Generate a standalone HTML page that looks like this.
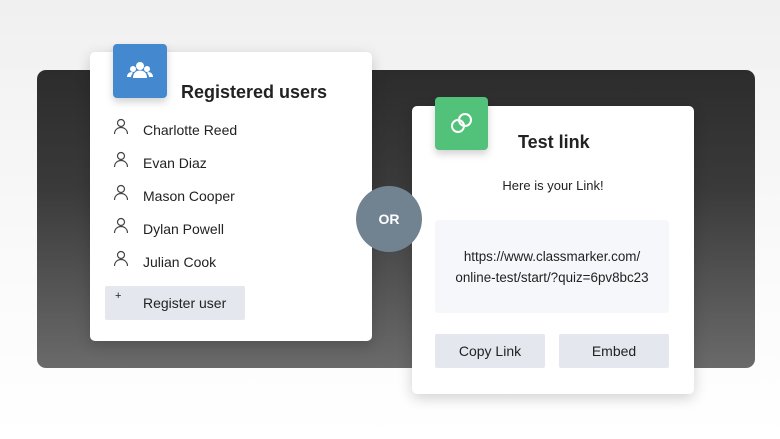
<!DOCTYPE html>
<html><head><meta charset="utf-8"><style>
*{margin:0;padding:0;box-sizing:border-box}
body{width:780px;height:439px;overflow:hidden;background:linear-gradient(180deg,#f0f0f0,#fafafa 60%,#fff);font-family:"Liberation Sans",sans-serif;position:relative;color:#222}
.panel{position:absolute;left:37px;top:70px;width:718px;height:298px;border-radius:9px;background:linear-gradient(180deg,#2c2c2c 0%,#3a3a3a 40%,#5a5a5a 80%,#6a6a6a 100%)}
.card{position:absolute;background:#fff;border-radius:5px;box-shadow:0 4px 14px rgba(0,0,0,.18)}
.ic{position:absolute;width:54px;height:54px;border-radius:4px;box-shadow:0 4px 8px rgba(0,0,0,.18)}
h2{position:absolute;font-size:18px;font-weight:bold;color:#222}
.u{position:absolute;left:53px;font-size:14px;color:#222}
.u svg{position:absolute;left:-30px;top:-4px}
.btn{position:absolute;background:#e4e8ee;border-radius:2px;font-size:14px;color:#222;text-align:center}
</style></head><body>
<div class="panel"></div>
<div class="card" style="left:90px;top:52px;width:282px;height:289px">
  <h2 style="left:91px;top:30px">Registered users</h2>
  <div class="u" style="top:70px"><svg width="16" height="18" viewBox="0 0 16 18" fill="none" stroke="#444" stroke-width="1.2"><circle cx="8" cy="5" r="3.5"/><path d="M1.5 16c0-4 3-6.5 6.5-6.5s6.5 2.5 6.5 6.5"/></svg>Charlotte Reed</div>
  <div class="u" style="top:103px"><svg width="16" height="18" viewBox="0 0 16 18" fill="none" stroke="#444" stroke-width="1.2"><circle cx="8" cy="5" r="3.5"/><path d="M1.5 16c0-4 3-6.5 6.5-6.5s6.5 2.5 6.5 6.5"/></svg>Evan Diaz</div>
  <div class="u" style="top:136px"><svg width="16" height="18" viewBox="0 0 16 18" fill="none" stroke="#444" stroke-width="1.2"><circle cx="8" cy="5" r="3.5"/><path d="M1.5 16c0-4 3-6.5 6.5-6.5s6.5 2.5 6.5 6.5"/></svg>Mason Cooper</div>
  <div class="u" style="top:169px"><svg width="16" height="18" viewBox="0 0 16 18" fill="none" stroke="#444" stroke-width="1.2"><circle cx="8" cy="5" r="3.5"/><path d="M1.5 16c0-4 3-6.5 6.5-6.5s6.5 2.5 6.5 6.5"/></svg>Dylan Powell</div>
  <div class="u" style="top:202px"><svg width="16" height="18" viewBox="0 0 16 18" fill="none" stroke="#444" stroke-width="1.2"><circle cx="8" cy="5" r="3.5"/><path d="M1.5 16c0-4 3-6.5 6.5-6.5s6.5 2.5 6.5 6.5"/></svg>Julian Cook</div>
  <div class="btn" style="left:15px;top:234px;width:140px;height:34px;text-align:left;padding:9px 0 0 38px">Register user<span style="position:absolute;left:10px;top:4px;font-size:11px">+</span></div>
</div>
<div class="ic" style="left:113px;top:44px;background:#4489d0">
  <svg width="54" height="54" viewBox="0 0 54 54" fill="#fff"><circle cx="27" cy="22" r="4"/><circle cx="20" cy="25" r="3"/><circle cx="34" cy="25" r="3"/><path d="M20 34c0-5 3-7.5 7-7.5s7 2.5 7 7.5z"/><path d="M14 33c0-3 2-5 5-5l1 1c-1 1-2 2.5-2 4z"/><path d="M40 33c0-3-2-5-5-5l-1 1c1 1 2 2.5 2 4z"/></svg>
</div>
<div class="card" style="left:412px;top:106px;width:282px;height:288px">
  <h2 style="left:106px;top:26px">Test link</h2>
  <div style="position:absolute;left:0;width:282px;top:72px;text-align:center;font-size:13px">Here is your Link!</div>
  <div style="position:absolute;left:23px;top:114px;width:234px;height:93px;background:#f5f7fa;border-radius:3px;text-align:center;font-size:13.4px;line-height:21px;padding-top:26px">https://www.classmarker.com/<br>online-test/start/?quiz=6pv8bc23</div>
  <div class="btn" style="left:23px;top:228px;width:110px;height:34px;line-height:34px">Copy Link</div>
  <div class="btn" style="left:147px;top:228px;width:110px;height:34px;line-height:34px">Embed</div>
</div>
<div class="ic" style="left:435px;top:97px;width:53px;height:53px;background:#52c27b">
  <svg width="53" height="53" viewBox="0 0 53 53" fill="none" stroke="#fff" stroke-width="2"><circle cx="23" cy="29" r="6"/><circle cx="30" cy="23" r="6"/></svg>
</div>
<div style="position:absolute;left:356px;top:186px;width:66px;height:66px;border-radius:50%;background:#718391;color:#fff;font-weight:bold;font-size:14px;text-align:center;line-height:66px">OR</div>
</body></html>
